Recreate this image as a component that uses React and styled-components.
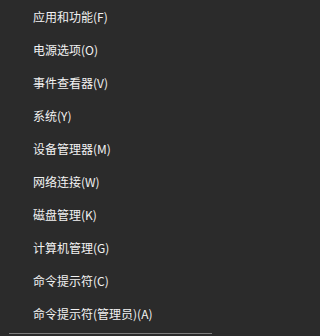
import React from 'react';
import styled, { createGlobalStyle } from 'styled-components';

const GlobalStyle = createGlobalStyle`
  html, body {
    margin: 0;
    padding: 0;
    background: #2b2b2b;
  }
`;

const items = [
  '应用和功能(F)',
  '电源选项(O)',
  '事件查看器(V)',
  '系统(Y)',
  '设备管理器(M)',
  '网络连接(W)',
  '磁盘管理(K)',
  '计算机管理(G)',
  '命令提示符(C)',
  '命令提示符(管理员)(A)',
];

const Menu = styled.div`
  width: 212px;
  height: 336px;
  background: #2b2b2b;
  display: flex;
  flex-direction: column;
  overflow: hidden;
  font-family: "Noto Sans CJK SC", "Liberation Sans", sans-serif;
`;

const Item = styled.div`
  height: 33px;
  display: flex;
  align-items: center;
  padding-left: 33px;
  color: #f2f2f2;
  font-size: 12px;
  white-space: nowrap;
`;

const Separator = styled.div`
  margin: 3px 0 0 9px;
  height: 1px;
  flex-shrink: 0;
  background: #7d7d7d;
`;

const App = () => {
  return (
    <>
      <GlobalStyle />
      <Menu>
        {items.map((label) => (
          <Item key={label}>{label}</Item>
        ))}
        <Separator />
      </Menu>
    </>
  );
};

export default App;
